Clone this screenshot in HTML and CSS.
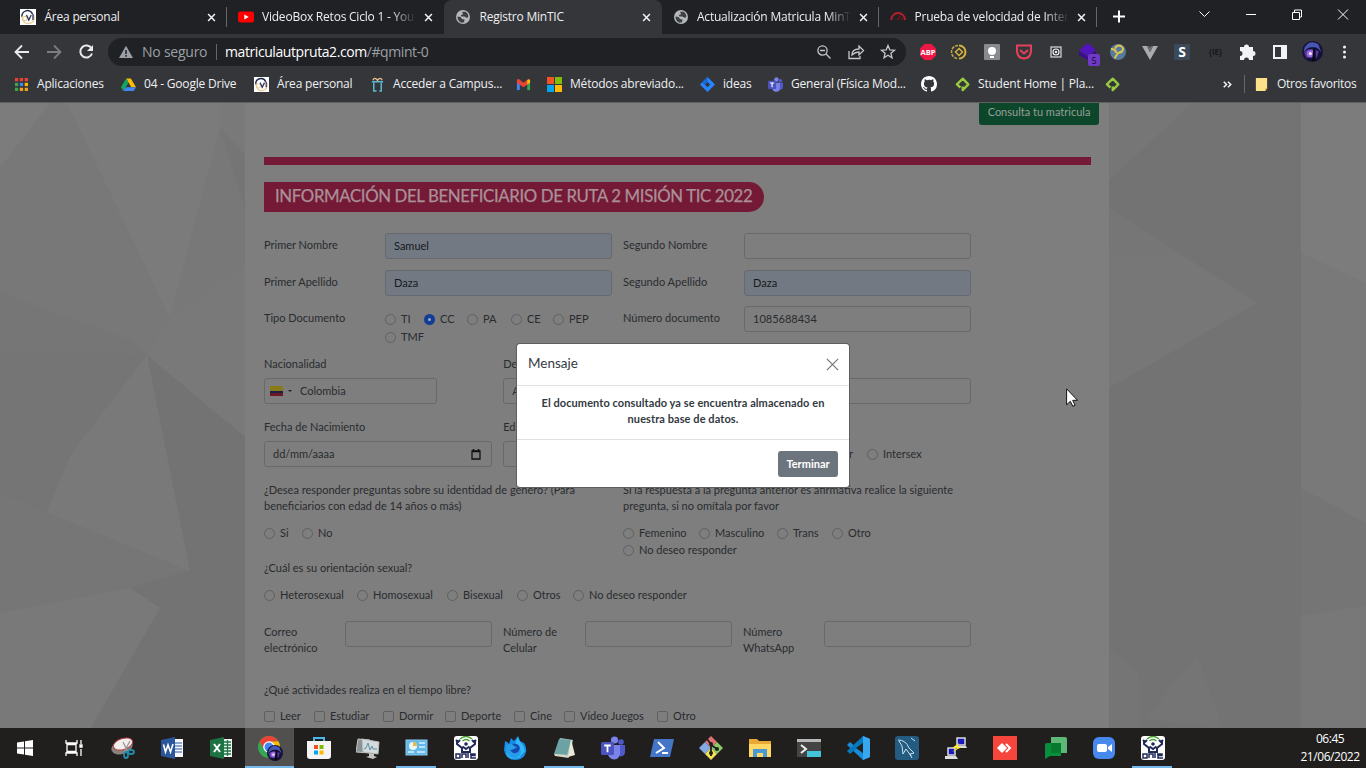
FILE: index.html
```html
<!DOCTYPE html>
<html lang="es">
<head>
<meta charset="utf-8">
<title>Registro MinTIC</title>
<link rel="stylesheet" href="styles.css">
</head>
<body>
<svg class="defs" width="0" height="0">
  <symbol id="close" viewBox="0 0 10 10"><path d="M1.2 1.2l7.6 7.6M8.800 1.2L1.2 8.8" stroke="#f1f3f4" stroke-width="1.7" fill="none"/></symbol>
  <symbol id="moodle" viewBox="0 0 16 16"><rect width="16" height="16" fill="#fff"/><path d="M2 8a5.500 5.500 0 0 1 10.500-3" stroke="#20294e" stroke-width="1.500" fill="none"/><path d="M13.600 6a6 6 0 1 1-11.200 1" stroke="#e8c98f" stroke-width="1.300" fill="none"/><circle cx="5" cy="9.500" r="2.200" fill="none" stroke="#e8c98f"/><path d="M6.500 6l2.300 5 2.400-5M13 5v6" stroke="#28335c" stroke-width="1.300" fill="none"/></symbol>
  <symbol id="globe" viewBox="0 0 14 14"><circle cx="7" cy="7" r="7" fill="#b4b7bb"/><path d="M1.500 6.500l3 .5 1.500 2 2.500.6-.4 2.600-2.300.6C3 12 1.500 9.500 1.500 6.500zM6 1.700l3.500.1C11.500 3 12.500 5 12.300 7.200l-2 .6-1.800-1.300-3 .1L4.800 5l2.400-.8z" fill="#3c4043"/></symbol>
  <symbol id="platzi" viewBox="0 0 16 16"><path d="M5.800 11.200L2 7.900 8.300 1.800l5.900 6L8.200 14v-3.800" stroke="#98ca3f" stroke-width="2.500" fill="none" stroke-linejoin="round"/></symbol>
  <symbol id="teams" viewBox="0 0 24 24"><circle cx="20" cy="6" r="2.800" fill="#5059c9"/><circle cx="13.500" cy="4" r="3.600" fill="#7b83eb"/><path d="M17 9h7v7.500a4 4 0 0 1-7 2.500z" fill="#5059c9"/><path d="M8 9h11v8a6 6 0 0 1-12 1z" fill="#7b83eb"/><rect y="6" width="13" height="13" rx="1.500" fill="#4b53bc"/><path d="M3.200 9.500h6.600M6.500 9.500v6.700" stroke="#fff" stroke-width="1.800"/></symbol>
  <symbol id="mintic" viewBox="0 0 24 24"><rect width="24" height="24" rx="3" fill="#fff"/><path d="M6 3q6-5 12 0M8.500 5q3.500-3 7 0" stroke="#46a12c" stroke-width="1.500" fill="none"/><circle cx="12" cy="8" r="1.800" fill="#222a59"/><path d="M3 4v4l5 4v5M21 4v4l-5 4v5M8.500 10.500L12 13l3.500-2.500M8.500 16h7M2 4l2 2 2-2M18 4l2 2 2-2" stroke="#222a59" stroke-width="2" fill="none"/><path d="M2 18h4v4H2zM8 22v-4h4v4M14 17v5M16 18h5v1.500h-4V22h5" stroke="#222a59" stroke-width="1.500" fill="none"/></symbol>
  <symbol id="galaxy" viewBox="0 0 20 20"><circle cx="10" cy="10" r="10" fill="#171138"/><path d="M2.500 6q5-8 13-3l3 8q-4-6-8-5-5-1-9 5z" fill="#4656b3"/><path d="M2 11q5-6 14-1l-2 6H4z" fill="#553a9e"/><circle cx="8" cy="12" r="3.500" fill="#9b65db"/><circle cx="8" cy="12" r="1.500" fill="#eee5ff"/><path d="M11 6l2 3v10H9.500l1-8z" fill="#080617"/></symbol>
</svg>
<div class="screen">
  <header class="tabs">
    <div class="tab"><svg class="fav"><use href="#moodle"/></svg><span class="title">Área personal</span><svg class="x"><use href="#close"/></svg></div>
    <div class="tab plain"><svg class="fav" viewBox="0 0 16 16"><rect y="2.500" width="16" height="11" rx="2.500" fill="#f00"/><path d="M6.300 5.500v5L10.700 8z" fill="#fff"/></svg><span class="title fade">VideoBox Retos Ciclo 1 - You</span><svg class="x"><use href="#close"/></svg></div>
    <div class="tab active"><svg class="fav"><use href="#globe" x="1" y="1" width="14" height="14"/></svg><span class="title">Registro MinTIC</span><svg class="x"><use href="#close"/></svg></div>
    <div class="tab"><svg class="fav"><use href="#globe" x="1" y="1" width="14" height="14"/></svg><span class="title fade">Actualización Matricula MinT</span><svg class="x"><use href="#close"/></svg></div>
    <div class="tab"><svg class="fav" viewBox="0 0 16 16"><path d="M1.200 11A6.800 6.800 0 1 1 15 11" stroke="#b51f2c" stroke-width="2" fill="none"/><path d="M7 11l2.500-5 1.500 1-2 4zM12 8l2 3h-3z" fill="#6d151e"/></svg><span class="title fade">Prueba de velocidad de Inter</span><svg class="x"><use href="#close"/></svg></div>
    <svg class="wincontrols" viewBox="0 0 270 34"><g fill="none" stroke="#fff"><path d="M17 16.500h12M23 10.500v12" stroke-width="2"/><path d="M103.500 11.500l5 5 5-5"/><path d="M150 14.500h10M196.500 12.500h7v7h-7zM198.500 12.500v-2.500h7v7h-2.500M242 9.500l10 10M252 9.500l-10 10"/></g></svg>
  </header>
  <div class="toolbar">
    <svg class="nav" viewBox="0 0 108 36" fill="none" stroke="#e8eaed" stroke-width="1.800"><path d="M29 18H16M22 11.500L15.500 18l6.500 6.500"/><path d="M47 18h13M54 11.500l6.500 6.500-6.500 6.500" stroke="#7b7d80"/><path d="M91.500 14.500A6 6 0 1 0 92 19.500" stroke-width="2"/><path d="M93 11v6h-6z" fill="#e8eaed" stroke="none"/></svg>
    <div class="omnibox">
      <svg class="warn" viewBox="0 0 14 14"><path d="M7 .8L14 13H0z" fill="#9aa0a6"/><path d="M7 5v4M7 10v1.700" stroke="#202124" stroke-width="1.500"/></svg>
      <span class="insecure">No seguro</span><span class="bar"></span><span class="url">matriculautpruta2.com<i>/#qmint-0</i></span>
      <svg class="omniicons" viewBox="0 0 84 20" fill="none" stroke="#c4c7cb" stroke-width="1.300"><circle cx="7.500" cy="8.500" r="4.600"/><path d="M11 12l4.500 4.500M5 8.500h5"/><path d="M34 9v7.500h11V14M37 13q0-6 7-6V4l4.500 4.500L44 13v-3q-4 0-7 3z"/><path d="M73 3.500l1.800 4.300 4.700.4-3.600 3 1.100 4.600-4-2.500-4 2.500 1.100-4.600-3.600-3 4.700-.4z"/></svg>
    </div>
    <svg class="extensions" viewBox="0 0 460 36">
      <path d="M18.500 10h7l4.500 4.500v7L25.500 26h-7L14 21.500v-7z" fill="#ed1846"/><text x="22" y="20.800" class="abp">ABP</text>
      <path d="M52 11.500a6.500 6.500 0 0 0 0 13" stroke="#c5ad45" stroke-width="1.500" stroke-dasharray="3 1" fill="none"/><path d="M53 11.500a6.500 6.500 0 0 1 0 13" stroke="#d4b33c" stroke-width="2" fill="none"/><path d="M53 14.500l3.500 3.500-3.500 3.500-3.500-3.500z" fill="none" stroke="#d4b33c" stroke-width="1.500"/>
      <rect x="78" y="10" width="16" height="16" rx="1" fill="#888b8d"/><circle cx="86" cy="17" r="4" fill="#fff"/><path d="M84 22h4v2h-4z" fill="#fff"/>
      <path d="M111 11.500h14v6q-1 7-7 7t-7-7z" fill="none" stroke="#e5405a" stroke-width="2"/><path d="M114 16l4 3.500 4-3.500" stroke="#e5405a" stroke-width="2" fill="none"/>
      <rect x="145" y="13" width="10" height="10" fill="none" stroke="#dadada" stroke-width="1.200"/><circle cx="150" cy="18" r="3" fill="none" stroke="#eee" stroke-width="1.200"/><circle cx="150" cy="18" r="1.200" fill="#eee"/>
      <path d="M173 16l9-7 8 7-8 6z" fill="#5314bd"/><path d="M173 17l9 6 8-6v4l-8 5-9-5z" fill="#3b0a99"/><rect x="182" y="20" width="12" height="12" rx="2" fill="#6f3ac5"/><text x="188" y="30" class="five">5</text>
      <circle cx="212" cy="18" r="8" fill="#557b9f"/><path d="M209 14.500q2-4 6-2.500 3.500 2 1 5.500-2 1-4 1.500-2 3-3.500 5.500M205 15q5 0 5 4" stroke="#e1c44a" stroke-width="2" fill="none"/>
      <path d="M236 12l8 14 8-14h-5l-3 6-3-6z" fill="#aaabad"/><path d="M241 12l3 6 3-6h-2l-1 2-1-2z" fill="#6d6e70"/>
      <rect x="268" y="10" width="16" height="16" fill="#3a4a5a"/><text x="276" y="23" class="s">S</text>
      <text x="309.500" y="21" class="brackets">{IE}</text>
      <path d="M335 13h3a2.500 2.500 0 1 1 5 0h4v4a2.500 2.500 0 1 1 0 5v4h-4a2.500 2.500 0 0 0-5 0h-4v-4a2.500 2.500 0 0 0 0-5v-4z" fill="#f1f3f4"/>
      <path d="M367 11h14v14h-14zM369 13v10h6V13z" fill="#f1f3f4" fill-rule="evenodd"/>
      <use href="#galaxy" x="396" y="7" width="21" height="21"/>
      <g fill="#f1f3f4"><circle cx="438.500" cy="13" r="1.500"/><circle cx="438.500" cy="18" r="1.500"/><circle cx="438.500" cy="23" r="1.500"/></g>
    </svg>
  </div>
  <nav class="bookmarks">
    <a><svg viewBox="0 0 16 16"><path d="M1 1h3.500v3.500H1zM6.200 1h3.500v3.500H6.200zM11.400 1h3.500v3.500h-3.500z" fill="#ea4335"/><path d="M1 6.200h3.500v3.500H1z" fill="#34a853"/><path d="M6.200 6.200h3.500v3.500H6.200z" fill="#4285f4"/><path d="M11.400 6.200h3.500v3.500h-3.500z" fill="#fbbc04"/><path d="M1 11.400h3.500v3.500H1z" fill="#34a853"/><path d="M6.200 11.400h3.500v3.500H6.200zM11.400 11.400h3.500v3.500h-3.500z" fill="#e9a51b"/></svg><b>Aplicaciones</b></a>
    <a><svg viewBox="0 0 16 16"><path d="M5.500 1.500h5L16 11h-5z" fill="#fbbc04"/><path d="M5.500 1.500L8 6 2.600 15 0 11z" fill="#11a861"/><path d="M5.200 11H16l-2.500 4H2.600z" fill="#4285f4"/></svg><b>04 - Google Drive</b></a>
    <a><svg><use href="#moodle"/></svg><b>Área personal</b></a>
    <a><svg viewBox="0 0 16 16" fill="none"><path d="M2 5h12M4 6v9h3M12 6v9h-2" stroke="#58b9ce" stroke-width="1.600"/><path d="M3 3.500q2-4 5 0 3-4 5 0" stroke="#e6bf8e" stroke-width="1.500"/></svg><b>Acceder a Campus...</b></a>
    <a><svg viewBox="0 0 16 16"><path d="M1 3h3v11H1z" fill="#4285f4"/><path d="M12 6h3v8h-3z" fill="#34a853"/><path d="M1 3l2-1 5 4 5-4 2 1v3l-7 5-7-5z" fill="#ea4335"/><path d="M12 3.500l2-1 1 1V6l-3 2z" fill="#fbbc04"/></svg></a>
    <a><svg viewBox="0 0 16 16"><path d="M0 0h7.500v7.500H0z" fill="#f35325"/><path d="M8.500 0H16v7.500H8.500z" fill="#81bc06"/><path d="M0 8.500h7.500V16H0z" fill="#05a6f0"/><path d="M8.500 8.500H16V16H8.500z" fill="#ffba08"/></svg><b>Métodos abreviado...</b></a>
    <a><svg viewBox="0 0 16 16"><path d="M8 0l8 8-8 8-8-8z" fill="#2684ff"/><path d="M8 5.200L10.800 8 8 10.800 5.200 8z" fill="#35363a"/><path d="M8 0v5L5 8l-3-2z" fill="#1768d7"/></svg><b>ideas</b></a>
    <a><svg><use href="#teams"/></svg><b>General (Física Mod...</b></a>
    <a class="github"><svg viewBox="0 0 16 16"><path fill="#fff" d="M8 0C3.580 0 0 3.580 0 8c0 3.540 2.290 6.530 5.470 7.590.4.070.55-.17.55-.38 0-.19-.01-.82-.01-1.490-2.010.37-2.530-.49-2.690-.94-.09-.23-.48-.94-.82-1.130-.28-.15-.68-.52-.01-.53.63-.01 1.080.58 1.230.82.72 1.210 1.870.87 2.330.66.07-.52.28-.87.51-1.070-1.780-.2-3.640-.89-3.640-3.950 0-.87.31-1.590.82-2.150-.08-.2-.36-1.020.08-2.120 0 0 .67-.21 2.200.82A7.600 7.600 0 0 1 8 3.860c.68 0 1.360.09 2 .27 1.530-1.040 2.200-.82 2.200-.82.44 1.100.16 1.920.08 2.120.51.56.82 1.270.82 2.150 0 3.070-1.870 3.750-3.650 3.950.29.25.54.73.54 1.480 0 1.070-.01 1.930-.01 2.200 0 .21.15.46.55.38A8 8 0 0 0 16 8c0-4.420-3.580-8-8-8z"/></svg></a>
    <a><svg><use href="#platzi"/></svg><b>Student Home | Pla...</b></a>
    <a><svg><use href="#platzi"/></svg></a>
    <a class="more"><svg viewBox="0 0 16 16"><path d="M4 5l3 3-3 3M8.500 5l3 3-3 3" fill="none" stroke="#f1f3f4" stroke-width="1.600"/></svg></a>
    <a class="others"><svg viewBox="0 0 16 16"><path d="M2 1h12v11l-2 3H2z" fill="#ffe08a"/><path d="M12 12h2l-2 3z" fill="#d5a642"/></svg><b>Otros favoritos</b></a>
  </nav>
  <main class="page">
    <svg class="backdrop" viewBox="0 0 1366 626" preserveAspectRatio="none">
      <rect width="1366" height="626" fill="#797979"/>
      <g class="facets">
      <path d="M0 0h50L0 65z" fill="#7e7e7e"/><path d="M50 0h17l103 215-23 38L0 190V65z" fill="#787878"/>
      <path d="M67 0h153v25l-50 190z" fill="#7c7c7c"/><path d="M220 25l25 28v110l-75 52z" fill="#787878"/><path d="M220 25l25 27v55z" fill="#747474"/>
      <path d="M0 190l130 47 17 15-147-5z" fill="#757575"/><path d="M0 247l147 5-75 98-27 63L0 390z" fill="#747474"/>
      <path d="M147 252l43 216-145-55 27-63z" fill="#7a7a7a"/><path d="M147 252l98 82v118l-55 16z" fill="#717171"/><path d="M0 390l190 78-60 17L0 512z" fill="#757575"/>
      <path d="M0 510l130-25 30 18-70 123H0z" fill="#7a7a7a"/><path d="M130 485l115-35v176H90l70-121z" fill="#727272"/>
      </g>
      <path d="M1109 0h192v626h-192z" fill="#737373"/>
      <g class="facets">
      <path d="M1109 0h83l-83 78z" fill="#777"/><path d="M1109 105l148 95-148 85z" fill="#787878"/>
      <path d="M1109 545l30 25 2 56h-32zM1145 616l52-65 26 75z" fill="#767676"/>
      <path d="M1301 0h65v180l-65-30z" fill="#7d7d7d"/><path d="M1301 303l65-20v90l-24 32-41-20z" fill="#797979"/><path d="M1301 385l65 35v83l-65 10z" fill="#747474"/><path d="M1301 513l65-10v123h-65z" fill="#787878"/>
      </g>
    </svg>
    <section class="panel">
      <div class="consultrow"><button class="consult">Consulta tu matricula</button></div>
      <div class="rule"></div>
      <h1>INFORMACIÓN DEL BENEFICIARIO DE RUTA 2 MISIÓN TIC 2022</h1>
      <div class="pair"><label>Primer Nombre</label><div class="input filled">Samuel</div><label>Segundo Nombre</label><div class="input"></div></div>
      <div class="pair"><label>Primer Apellido</label><div class="input filled">Daza</div><label>Segundo Apellido</label><div class="input filled">Daza</div></div>
      <div class="pair doc"><label>Tipo Documento</label><div class="choices types"><span class="r">TI</span><span class="r on">CC</span><span class="r">PA</span><span class="r">CE</span><span class="r">PEP</span><span class="r">TMF</span></div><label>Número documento</label><div class="input">1085688434</div></div>
      <div class="triple"><div class="field nation"><label>Nacionalidad</label><div class="input"><i class="flag"></i><i class="caret"></i>Colombia</div></div><div class="field"><label>De</label><div class="input">A</div></div><div class="field"><label>&nbsp;</label><div class="input"></div></div></div>
      <div class="triple"><div class="field"><label>Fecha de Nacimiento</label><div class="input date">dd/mm/aaaa<svg viewBox="0 0 10 11"><path d="M1 2h8v8H1z" fill="none" stroke="#111" stroke-width="1.300"/><path d="M1 2.500h8M2.500 0v2M7.500 0v2" stroke="#111" stroke-width="1.500"/></svg></div></div><div class="field"><label>Eda</label><div class="input"></div></div><div class="field sex"><span>r</span><span class="r">Intersex</span></div></div>
      <div class="halves"><div><p>¿Desea responder preguntas sobre su identidad de género? (Para<br>beneficiarios con edad de 14 años o más)</p><div class="choices yesno"><span class="r">Si</span><span class="r">No</span></div></div><div><p>Si la respuesta a la pregunta anterior es afirmativa realice la siguiente<br>pregunta, si no omítala por favor</p><div class="choices gender"><span class="r">Femenino</span><span class="r">Masculino</span><span class="r">Trans</span><span class="r">Otro</span><span class="r">No deseo responder</span></div></div></div>
      <p class="question">¿Cuál es su orientación sexual?</p>
      <div class="choices orientation"><span class="r">Heterosexual</span><span class="r">Homosexual</span><span class="r">Bisexual</span><span class="r">Otros</span><span class="r">No deseo responder</span></div>
      <div class="contact"><label>Correo<br>electrónico</label><div class="input"></div><label>Número de<br>Celular</label><div class="input"></div><label>Número<br>WhatsApp</label><div class="input"></div></div>
      <p class="question">¿Qué actividades realiza en el tiempo libre?</p>
      <div class="choices hobbies"><span class="r">Leer</span><span class="r">Estudiar</span><span class="r">Dormir</span><span class="r">Deporte</span><span class="r">Cine</span><span class="r">Video Juegos</span><span class="r">Otro</span></div>
    </section>
    <div class="modal">
      <div class="modalhead">Mensaje<svg viewBox="0 0 12 12"><path d="M.8.8l10.400 10.400M11.200.8L.8 11.200" stroke="#777" stroke-width="1.200"/></svg></div>
      <div class="modalbody">El documento consultado ya se encuentra almacenado en<br>nuestra base de datos.</div>
      <div class="modalfoot"><button class="finish">Terminar</button></div>
    </div>
    <svg class="cursor" viewBox="0 0 12 19"><path d="M.6.8v16l3.700-3.500 2.500 5 2.300-1-2.400-5H11.500z" fill="#fff" stroke="#111"/></svg>
  </main>
  <footer class="taskbar">
    <i><svg viewBox="0 0 24 24"><path d="M4 6.500l7-1v6H4zM12 5.300L20 4v7.500h-8zM4 12.500h7v6l-7-1zM12 12.500h8V20l-8-1.300z" fill="#fff"/></svg></i>
    <i><svg viewBox="0 0 24 24" fill="none" stroke="#fff" stroke-width="1.300"><path d="M4 4v3h11V4M4 20v-3h11v3M5 8.500h9v7H5zM19 4v4M19 13v7"/><path d="M18 9h2v2h-2z" fill="#fff"/></svg></i>
    <i><svg viewBox="0 0 24 24"><ellipse cx="11" cy="11" rx="11" ry="7" fill="#8b8080" transform="rotate(-20 11 11)"/><ellipse cx="12" cy="8" rx="10" ry="5.500" fill="#f3eeee" stroke="#b53b3b" transform="rotate(-18 12 8)"/><path d="M12 6l5 10M19 5l-6 11" stroke="#9a9696" stroke-width="1.300"/><ellipse cx="15" cy="19" rx="2" ry="3" fill="none" stroke="#258cac" stroke-width="1.800"/><ellipse cx="20" cy="16" rx="3" ry="2" fill="none" stroke="#258cac" stroke-width="1.800"/></svg></i>
    <i><svg viewBox="0 0 24 24"><path d="M13 3h10v18H13z" fill="#f5f8ff"/><path d="M15 7h7M15 10h7M15 13h7M15 16h7" stroke="#285799" stroke-width="1.200"/><path d="M1 4l14-3v22L1 20z" fill="#2b579a"/><path d="M3.500 8.500L5.500 16 8 9l2.500 7L13 8" fill="none" stroke="#fff" stroke-width="1.600"/></svg></i>
    <i><svg viewBox="0 0 24 24"><path d="M13 3h10v18H13z" fill="#eef8f1"/><path d="M15 6h7M15 9h7M15 12h7M15 15h7M15 18h7M18.500 4v16" stroke="#217346" stroke-width="1.300"/><path d="M1 4l14-3v22L1 20z" fill="#1d7343"/><path d="M5 8l6 8M11 8l-6 8" stroke="#fff" stroke-width="2"/></svg></i>
    <i class="current"><svg viewBox="0 0 26 26"><circle cx="12" cy="12" r="11" fill="#34a853"/><path d="M2.500 6.500A11 11 0 0 1 21.500 6.500H12L7 14z" fill="#ea4335"/><path d="M12 6.500h9.500A11 11 0 0 1 12 23l5-9z" fill="#fbbc04"/><circle cx="12" cy="12" r="5.800" fill="#fff"/><circle cx="12" cy="12" r="4.500" fill="#4285f4"/><use href="#galaxy" x="10" y="10" width="16" height="16"/></svg></i>
    <i><svg viewBox="0 0 24 24"><path d="M7 6V2h10v4" fill="none" stroke="#4ab8e8" stroke-width="2"/><path d="M0 5h24v15q0 3-3 3H3q-3 0-3-3z" fill="#f4f4f4"/><path d="M7 9h4v4H7z" fill="#f25022"/><path d="M12.500 9h4v4h-4z" fill="#7fba00"/><path d="M7 14.500h4v4H7z" fill="#00a4ef"/><path d="M12.500 14.500h4v4h-4z" fill="#ffb900"/></svg></i>
    <i><svg viewBox="0 0 24 24"><path d="M2 3l12 1v13L0 16z" fill="#8a9294" stroke="#c4c7c5"/><path d="M6 3l17 3-1 12-15-2z" fill="#d3dbdc" stroke="#b9bdbb"/><path d="M8 13l2-1 2-5 2 7 2-4 1 3h4" fill="none" stroke="#5c91a6"/><path d="M13 17l5 1v2l3 1-4 2-7-2 3-1z" fill="#c4c4be"/></svg></i>
    <i class="running"><svg viewBox="0 0 24 24"><rect x="1" y="4" width="21" height="15" fill="#62b8e9" stroke="#8acbed"/><circle cx="8" cy="10" r="4" fill="#eaf7fa"/><path d="M8 6v4h4a4 4 0 0 0-4-4z" fill="#edb843"/><path d="M14 7h6M14 11h6M3 16h6M12 16h8" stroke="#d9f2ff" stroke-width="1.700"/></svg></i>
    <i><svg><use href="#mintic"/></svg></i>
    <i><svg viewBox="0 0 24 24"><path d="M2 5q3 1 4 3l2-6 3 3 4-5 2 5 4 2q3 5 2 9-2 8-11 8T1 14z" fill="#168bea"/><path d="M15 1q2 6 5 8l2 6-6 7q-11 3-13-5l7 2 5-4-4-5z" fill="#32b8f4"/><circle cx="11.500" cy="13" r="5.500" fill="#1649b0"/><path d="M3 9q6-3 8 1l3 1-3 2q-4 2-5 0l4 4q6 1 7-5 3 7-4 10-8 0-10-7z" fill="#269de8"/></svg></i>
    <i class="open"><svg viewBox="0 0 24 24"><path d="M8 2l13 2-4 17-14-2z" fill="#a4c7c6"/><path d="M7 3l12 1-4 15-13-1z" fill="#6ba3a5"/><path d="M19 3l4 16-7 2z" fill="#ece8d6"/><path d="M2 18l13 1 2 3-14-2z" fill="#ddd6c6"/></svg></i>
    <i><svg><use href="#teams"/></svg></i>
    <i><svg viewBox="0 0 24 24"><path d="M4 3h20l-4 18H0z" fill="#4475c6"/><path d="M8 6l6 6-8 5M12 17h6" fill="none" stroke="#fff" stroke-width="2"/></svg></i>
    <i><svg viewBox="0 0 24 24"><path d="M12 0l6 6-6 6-6-6z" fill="#e57070"/><path d="M18 6l6 6-6 6-6-6z" fill="#8bca68"/><path d="M6 6l6 6-6 6-6-6z" fill="#83aae2"/><path d="M12 12l6 6-6 6-6-6z" fill="#f5e156"/><path d="M8 3l4 5v12M12 9l6 4" stroke="#211e1e" stroke-width="1.800" fill="none"/><g fill="#211e1e"><circle cx="12" cy="8" r="2"/><circle cx="12" cy="17" r="2"/><circle cx="18" cy="13" r="2"/></g></svg></i>
    <i><svg viewBox="0 0 24 24"><path d="M1 3h8l2 2h12v15H1z" fill="#e8aa34"/><path d="M1 8h22v13H1z" fill="#ffd765"/><path d="M5 21v-8h14v8h-4v-4H9v4z" fill="#4899d6"/></svg></i>
    <i><svg viewBox="0 0 24 24"><path d="M0 3h24v18H0z" fill="#444"/><path d="M0 3h24v3H0z" fill="#b8b8b8"/><path d="M4 9l5 4-5 4" stroke="#eee" stroke-width="2" fill="none"/><path d="M10 15h14v6H10z" fill="#41c5d7"/></svg></i>
    <i><svg viewBox="0 0 24 24"><path d="M17 0l7 3v18l-7 3L1 9l3-3 13 11z" fill="#198bd6"/><path d="M17 0l7 3v18l-7 3z" fill="#37a8ed"/><path d="M17 0v7L4 18l-3-3z" fill="#0878bd"/><path d="M17 7v10l-7-5z" fill="#202020"/></svg></i>
    <i><svg viewBox="0 0 24 24"><rect width="24" height="24" rx="3" fill="#245b80"/><path d="M3 4q8 0 11 8l5 5-4 1 2 4M4 5l3 5 1 8 3-5 5 7M16 2l4 3" fill="none" stroke="#c8e3ef"/></svg></i>
    <i><svg viewBox="0 0 24 24"><path d="M13 2h8v7h-8zM4 12h7v7H4z" fill="#1717bd" stroke="#ddd" stroke-width="1.500"/><path d="M12 10h10l1 2H11zM1 20h11l2 3H1z" fill="#ddd"/><path d="M15 7L8 12h5l-5 4 10-5h-5z" fill="#ffe928"/></svg></i>
    <i><svg viewBox="0 0 24 24"><path d="M0 0h24v24H0z" fill="#f6453b"/><path d="M9 7l5 5-5 5-5-5z" fill="#fff"/><path d="M13 8l4 4-4 4" stroke="#fff" stroke-width="2" fill="none"/></svg></i>
    <i><svg viewBox="0 0 24 24"><path d="M8 1h14q2 0 2 2v14H8z" fill="#5db878"/><path d="M4 7h14v13H7l-5 3V9q0-2 2-2z" fill="#078f3b"/><path d="M8 7h10v10H8z" fill="#06792f"/></svg></i>
    <i><svg viewBox="0 0 24 24"><rect x="1" y="1" width="22" height="22" rx="6" fill="#4789ef"/><rect x="5" y="8" width="10" height="8" rx="2" fill="#fff"/><path d="M16 11l4-3v8l-4-3z" fill="#fff"/></svg></i>
    <i class="open"><svg><use href="#mintic"/></svg></i>
    <div class="clock">06:45<br>21/06/2022</div>
  </footer>
</div>
</body>
</html>
```
FILE: styles.css
```css
*, *::before { box-sizing: border-box; }
body { margin: 0; overflow: hidden; font-family: "Open Sans", sans-serif; font-size: 12px; }
svg { flex: none; display: block; }
.defs { position: absolute; }
.screen { width: 1366px; height: 768px; display: flex; flex-direction: column; background: #202124; }

.tabs { height: 34px; display: flex; padding-left: 9px; background: #202124; color: #eceef0; }
.tab { width: 217.5px; flex: none; display: flex; align-items: center; padding-left: 11px; border-radius: 8px 8px 0 0; background: linear-gradient(#65676a, #65676a) right 0 center / 1px 20px no-repeat; }
.tab.plain { background: none; }
.tab.active { background: #35363a; }
.fav { width: 16px; height: 16px; }
.title { width: 154px; margin: 0 8px 0 8.500px; white-space: nowrap; letter-spacing: -.22px; line-height: 18px; }
.fade { mask-image: linear-gradient(90deg, #000 84%, transparent 100%); }
.x { width: 9px; height: 9px; }
.wincontrols { width: 270px; height: 34px; margin-left: -1px; }

.toolbar { height: 36px; display: flex; background: #35363a; }
.nav { width: 108px; height: 36px; }
.omnibox { width: 798px; height: 28px; margin-top: 4px; border-radius: 14px; background: #202124; display: flex; align-items: center; padding: 0 0 1px 11px; font-size: 14px; letter-spacing: -.24px; color: #9aa0a6; }
.warn { width: 14px; height: 14px; }
.insecure { width: 74px; margin-left: 9px; white-space: nowrap; line-height: 18px; }
.bar { width: 1px; height: 16px; background: #63666a; }
.url { flex: 1; margin-left: 8px; color: #fff; letter-spacing: -.42px; line-height: 18px; }
.url i { font-style: normal; color: #9aa0a6; }
.omniicons { width: 84px; height: 20px; margin-right: 7px; }
.extensions { width: 460px; height: 36px; }
.extensions text { text-anchor: middle; fill: #fff; font-weight: 700; }
.extensions .abp { font-size: 7.500px; }
.extensions .five { font-size: 9px; font-weight: 400; fill: #160535; }
.extensions .s { font-size: 14px; }
.extensions .brackets { font-size: 8px; fill: #17181a; }

.bookmarks { height: 32px; display: grid; grid-template-columns: 107px 133px 116px 146px 31px 153px 68px 153px 34px 150px 115px 24px 123px; align-items: center; padding: 0 0 4px 14px; background: #35363a; color: #eef0f2; }
.bookmarks a { display: flex; align-items: center; gap: 8px; }
.bookmarks svg { width: 15px; height: 15px; }
.bookmarks .github svg { width: 16px; height: 16px; }
.bookmarks b { font-weight: 400; letter-spacing: -.2px; white-space: nowrap; line-height: 18px; }
.bookmarks .others { border-left: 1px solid #66686b; padding-left: 9px; }
.bookmarks .others b { letter-spacing: -.28px; }

.page { position: relative; height: 626px; overflow: hidden; font-family: Lato, sans-serif; font-size: 11px; letter-spacing: 0; color: #292c2f; border-top: 1px solid #5f5f60; }
.backdrop { position: absolute; inset: 0; width: 1366px; height: 626px; }
.facets { opacity: .75; }
.panel { position: relative; width: 864px; height: 626px; margin-left: 245px; padding: 0 10px 0 19px; background: #7e7e7e; }
.panel label, .panel p { display: block; margin: 0; line-height: 16px; white-space: nowrap; }
.consultrow { height: 22px; display: flex; justify-content: flex-end; }
button { border: 0; font-family: inherit; }
.consult { width: 120px; height: 22px; padding: 0 0 6px; border-radius: 0 0 3px 3px; background: #0d472b; color: #969e9a; font-size: 11px; }
.rule { width: 827px; height: 8px; margin-top: 32px; background: #741a37; }
h1 { width: 500px; height: 30px; margin: 17px 0 21px; padding: 0 0 0 11px; border-radius: 0 15px 15px 0; background: #741a37; color: #aa9097; font-size: 16.800px; line-height: 28px; font-weight: 400; letter-spacing: -.36px; white-space: nowrap; -webkit-text-stroke: .25px #aa9097; }
.pair { display: grid; grid-template-columns: 121px 227px 11px 121px 227px; height: 26px; margin-bottom: 10.500px; align-items: start; }
.pair label { margin-top: 4px; }
.pair > :nth-child(3) { grid-column: 4; }
.pair > :nth-child(4) { grid-column: 5; }
.input { height: 26px; border: 1px solid #666a6e; border-radius: 3px; padding: 0 8px; line-height: 24px; white-space: nowrap; }
.filled { background: #727982; color: #16191e; }
.choices { display: grid; }
.r { height: 17.600px; display: flex; align-items: center; line-height: 17px; white-space: nowrap; }
.r::before { content: ""; flex: none; width: 11px; height: 11px; margin: 2px 5px 0 0; border: 1px solid #606060; border-radius: 50%; }
.r.on::before { border: 4px solid #123c96; background: #a3abb9; }
.types { grid-template-columns: 39px 43px 44px 42px 50px; margin-top: 4px; }
.doc { margin-bottom: 24px; }
.triple { display: grid; grid-template-columns: 228px 228.500px 228px; column-gap: 11.250px; height: 48px; margin-bottom: 15px; }
.triple .field { display: flex; flex-direction: column; gap: 6px; }
.nation .input { width: 173px; display: flex; align-items: center; padding-left: 5px; }
.flag { width: 13px; height: 10px; background: linear-gradient(#887b18 50%, #182149 50% 75%, #6a1826 75%); }
.caret { margin: 0 8px 0 5px; border: 2px solid transparent; border-top-color: #222; border-bottom: 0; }
.date { display: flex; align-items: center; justify-content: space-between; }
.date svg { width: 10px; height: 11px; margin-right: 2px; }
.triple .sex { flex-direction: row; align-items: flex-end; padding: 0 0 5px 106px; gap: 13px; }
.sex > span:first-child { width: 5px; line-height: 17px; }
.halves { display: grid; grid-template-columns: 359px 490px; height: 78px; }
.yesno, .gender { margin-top: 9.500px; }
.yesno { grid-template-columns: 38px 60px; }
.gender { grid-template-columns: 76px 78px 55px 80px; }
.gender .r:last-child { grid-column: span 3; }
.orientation { grid-template-columns: 93px 90px 70px 56px 150px; margin-top: 10px; }
.contact { display: grid; grid-template-columns: 81px 147px 93px 147px 92px 147px; margin: 17px 0 26px; }
.contact label { padding-top: 3px; }
.contact label:nth-of-type(n+2) { padding-left: 11px; }
.hobbies { grid-template-columns: 50px 69px 62px 69px 50px 93px 60px; margin-top: 9px; }
.hobbies .r::before { border-radius: 2px; }

.modal { position: absolute; left: 517px; top: 241px; width: 332px; height: 143px; border-radius: 3px; background: #fff; box-shadow: 0 0 0 1px #5e5e5e; color: #343a3f; }
.modalhead { height: 42px; border-bottom: 1px solid #dee2e6; display: flex; justify-content: space-between; padding: 8.500px 10px 0 11px; font-size: 13.500px; line-height: 20px; }
.modalhead svg { width: 13px; height: 13px; margin-top: 5px; }
.modalbody { height: 54px; border-bottom: 1px solid #dee2e6; padding-top: 9px; text-align: center; line-height: 16px; font-weight: 700; letter-spacing: .08px; }
.modalfoot { display: flex; justify-content: flex-end; padding: 11px 11px 0 0; }
.finish { width: 60px; height: 26px; padding: 0 0 1px; border-radius: 3px; background: #6c757d; color: #fff; font-size: 11px; font-weight: 700; }
.cursor { position: absolute; left: 1066px; top: 285px; width: 12px; height: 19px; }

.taskbar { height: 40px; display: flex; background: #201f1e; }
.taskbar > i { width: 49.050px; flex: none; display: flex; align-items: center; justify-content: center; }
.taskbar svg { width: 24px; height: 24px; }
.taskbar .current { background: #51504f; border-bottom: 2px solid #76b9ed; padding-top: 2px; }
.taskbar .current svg { width: 26px; height: 26px; }
.taskbar .running, .taskbar .open { background: linear-gradient(#76b9ed, #76b9ed) 4px 38px / 40px 2px no-repeat; }
.clock { flex: 1; padding: 2px 3px 0 0; color: #fff; text-align: center; line-height: 18px; letter-spacing: -.45px; margin-left: 120px; }
```
